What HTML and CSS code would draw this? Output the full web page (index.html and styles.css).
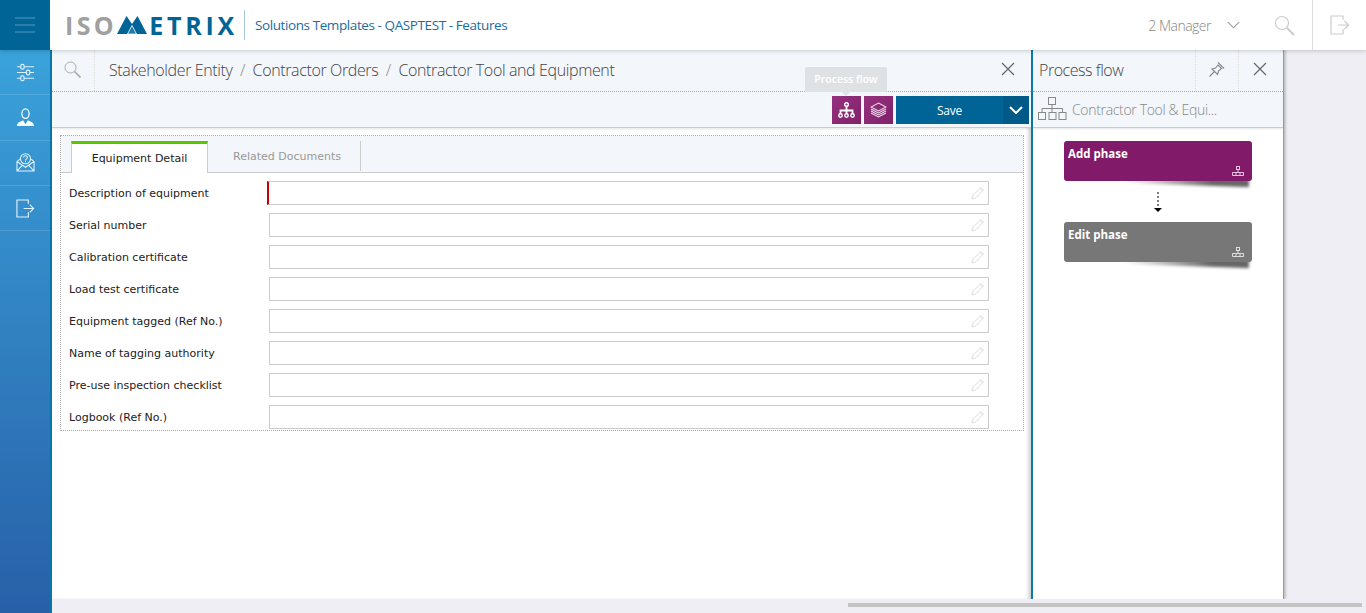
FILE: index.html
```html
<!DOCTYPE html>
<html lang="en">
<head>
  <meta charset="UTF-8" />
  <title>Isometrix - Contractor Tool and Equipment</title>
  <link rel="stylesheet" href="styles.css">
</head>
<body>
  <header class="topbar">
    <div class="menu-btn">
      <svg width="22" height="20" viewBox="0 0 22 20"><path d="M1 3h20M1 10h20M1 17h20" stroke="#2a7fab" stroke-width="2" /></svg>
    </div>
    <div class="logo">
      <span class="logo-iso">ISO</span>
      <svg class="logo-mark" width="30" height="18" viewBox="0 0 30 18"><path d="M0 18 9.500 0 15 8 20.500 0 30 18z" fill="#006496" /><path d="M10.500 18 15 9.500 19.500 18z" fill="#1f7ba8" stroke="#fff" stroke-width=".8" /></svg>
      <span class="logo-rest">ETRIX</span>
    </div>
    <div class="app-title">Solutions Templates - QASPTEST - Features</div>
    <div class="topbar-right">
      <span class="user-name">2 Manager</span>
      <svg class="user-arrow" width="13" height="8" viewBox="0 0 14 8"><path d="M1 1l6 6 6-6" fill="none" stroke="#999" stroke-width="1.200" /></svg>
      <svg class="top-search" width="21" height="21" viewBox="0 0 21 21"><circle cx="8" cy="8" r="6.500" fill="none" stroke="#ccc" stroke-width="1.200" /><path d="M13 13l7 7" stroke="#ccc" stroke-width="2" /></svg>
      <div class="top-exit">
        <svg width="20" height="20" viewBox="0 0 20 20"><path d="M13 5V1H1v18h12v-5M8 10h10M14.500 6l4 4-4 4" fill="none" stroke="#ccc" stroke-width="1.200" /></svg>
      </div>
    </div>
  </header>

  <div class="workspace">
    <nav class="sidebar">
      <a class="side-item">
        <svg viewBox="0 0 20 20"><path d="M1 4h18M1 10h18M1 16h18" stroke="#dff0fa" stroke-width="1.200" /><g fill="#3a9fd8" stroke="#dff0fa" stroke-width="1.200"><rect x="5" y="1.500" width="3.500" height="5" rx="1.500" /><rect x="11" y="7.500" width="3.500" height="5" rx="1.500" /><rect x="5" y="13.500" width="3.500" height="5" rx="1.500" /></g></svg>
      </a>
      <a class="side-item">
        <svg viewBox="0 0 20 20"><ellipse cx="10" cy="6" rx="3.800" ry="5" fill="none" stroke="#fff" stroke-width="1.300" /><path d="M1 19c0-4 4-4.500 6.500-6l2.500 4 2.500-4c2.500 1.500 6.500 2 6.500 6z" fill="#fff" /></svg>
      </a>
      <a class="side-item">
        <svg viewBox="0 0 20 20"><path d="M1 9l3-2.500M19 9l-3-2.500M1 9v10h18V9M1 9l9 6 9-6M1 19l6-6.500M19 19l-6-6.500" fill="none" stroke="#e4f2fb" stroke-width="1.100" /><circle cx="10" cy="6" r="5.300" fill="none" stroke="#e4f2fb" stroke-width="1.100" /><path d="M8 4.800c0-2.400 4-2.400 4 0 0 1.400-2 1.400-2 3M10 8.500v1" fill="none" stroke="#e4f2fb" stroke-width="1.100" /></svg>
      </a>
      <a class="side-item">
        <svg viewBox="0 0 20 20"><path d="M13 5V1H1v18h12v-5M8 10h10M14.500 6l4 4-4 4" fill="none" stroke="#e4f2fb" stroke-width="1.200" /></svg>
      </a>
    </nav>

    <div class="stage">
      <div class="panels">
        <main class="main">
          <div class="crumbbar">
            <div class="crumb-search">
              <svg width="17" height="17" viewBox="0 0 17 17"><circle cx="6.500" cy="6.500" r="5.500" fill="none" stroke="#aaa" /><path d="M10.500 10.500l6 6" stroke="#aaa" stroke-width="1.600" /></svg>
            </div>
            <div class="crumbs">
              <span>Stakeholder Entity</span><i>/</i><span>Contractor Orders</span><i>/</i><span>Contractor Tool and Equipment</span>
            </div>
            <svg class="close-x" width="14" height="14" viewBox="0 0 14 14"><path d="M1 1l12 12M13 1L1 13" stroke="#666" stroke-width="1.200" /></svg>
          </div>
          <div class="toolbar">
            <div class="tooltip">Process flow</div>
            <button class="tool-btn">
              <svg width="17" height="16" viewBox="0 0 17 16"><circle cx="8.500" cy="2.500" r="1.800" fill="none" stroke="#fff" stroke-width="1.400" /><path d="M8.500 4v8M2.500 12V8.500h12V12" fill="none" stroke="#fff" stroke-width="1.800" /><g fill="none" stroke="#fff" stroke-width="1.400"><circle cx="2.500" cy="13.500" r="1.700" /><circle cx="8.500" cy="13.500" r="1.700" /><circle cx="14.500" cy="13.500" r="1.700" /></g></svg>
            </button>
            <button class="tool-btn">
              <svg width="17" height="16" viewBox="0 0 17 16"><g fill="none" stroke="#ead9e6" stroke-width="1.100"><path d="M8.500 1l7.500 4-7.500 4L1 5z" /><path d="M1 7l7.500 4L16 7M1 9l7.500 4L16 9M1 11l7.500 4 7.500-4" /></g></svg>
            </button>
            <div class="save-group">
              <button class="save-btn">Save</button>
              <button class="save-more">
                <svg width="14" height="8" viewBox="0 0 14 8"><path d="M1 1l6 6 6-6" fill="none" stroke="#fff" stroke-width="2" /></svg>
              </button>
            </div>
          </div>

          <section class="form-box">
            <div class="tabs">
              <div class="tab tab-active">Equipment Detail</div>
              <div class="tab">Related Documents</div>
            </div>
            <div class="rows">
              <div class="row row-required"><label>Description of equipment</label><div class="field"><svg class="pen" width="14" height="14" viewBox="0 0 14 14"><path d="M1 13l.800-3.500L10 1.500l2.500 2.500-8 8zM9 2.500l2.500 2.500" fill="none" stroke="#ddd" /></svg></div></div>
              <div class="row"><label>Serial number</label><div class="field"><svg class="pen" width="14" height="14" viewBox="0 0 14 14"><path d="M1 13l.800-3.500L10 1.500l2.500 2.500-8 8zM9 2.500l2.500 2.500" fill="none" stroke="#ddd" /></svg></div></div>
              <div class="row"><label>Calibration certificate</label><div class="field"><svg class="pen" width="14" height="14" viewBox="0 0 14 14"><path d="M1 13l.800-3.500L10 1.500l2.500 2.500-8 8zM9 2.500l2.500 2.500" fill="none" stroke="#ddd" /></svg></div></div>
              <div class="row"><label>Load test certificate</label><div class="field"><svg class="pen" width="14" height="14" viewBox="0 0 14 14"><path d="M1 13l.800-3.500L10 1.500l2.500 2.500-8 8zM9 2.500l2.500 2.500" fill="none" stroke="#ddd" /></svg></div></div>
              <div class="row"><label>Equipment tagged (Ref No.)</label><div class="field"><svg class="pen" width="14" height="14" viewBox="0 0 14 14"><path d="M1 13l.800-3.500L10 1.500l2.500 2.500-8 8zM9 2.500l2.500 2.500" fill="none" stroke="#ddd" /></svg></div></div>
              <div class="row"><label>Name of tagging authority</label><div class="field"><svg class="pen" width="14" height="14" viewBox="0 0 14 14"><path d="M1 13l.800-3.500L10 1.500l2.500 2.500-8 8zM9 2.500l2.500 2.500" fill="none" stroke="#ddd" /></svg></div></div>
              <div class="row"><label>Pre-use inspection checklist</label><div class="field"><svg class="pen" width="14" height="14" viewBox="0 0 14 14"><path d="M1 13l.800-3.500L10 1.500l2.500 2.500-8 8zM9 2.500l2.500 2.500" fill="none" stroke="#ddd" /></svg></div></div>
              <div class="row"><label>Logbook (Ref No.)</label><div class="field"><svg class="pen" width="14" height="14" viewBox="0 0 14 14"><path d="M1 13l.800-3.500L10 1.500l2.500 2.500-8 8zM9 2.500l2.500 2.500" fill="none" stroke="#ddd" /></svg></div></div>
            </div>
          </section>
        </main>

        <aside class="flow">
          <div class="flow-head">
            <div class="flow-title">Process flow</div>
            <div class="flow-btn">
              <svg width="16" height="15" viewBox="0 0 16 15"><path d="M.5 14.500l5-5M3 7l5.500 5.500 1-3.500 3-2.500-3.500-3.500-2.500 3zM9 .5l6 6" fill="none" stroke="#888" stroke-width="1.100" /></svg>
            </div>
            <div class="flow-btn flow-btn-close">
              <svg width="14" height="14" viewBox="0 0 14 14"><path d="M1 1l12 12M13 1L1 13" stroke="#666" stroke-width="1.200" /></svg>
            </div>
          </div>
          <div class="flow-sub">
            <svg width="29" height="24" viewBox="0 0 29 24"><g fill="none" stroke="#888"><rect x="10.500" y=".5" width="7" height="7" /><rect x=".5" y="15.500" width="7" height="7" /><rect x="11" y="15.500" width="7" height="7" /><rect x="21" y="15.500" width="7" height="7" /><path d="M14 7.500v8M4 15.500v-4h20.500v4" /></g></svg>
            <span>Contractor Tool &amp; Equi...</span>
          </div>
          <div class="flow-body">
            <div class="phase phase-add">
              <span>Add phase</span>
              <svg width="12" height="10" viewBox="0 0 12 10"><g fill="none" stroke="#e6c4de"><rect x="4.500" y=".5" width="3" height="3" /><path d="M.5 6.500h11v3H.5zM4 6.500v3M8 6.500v3M6 3.500v3" /></g></svg>
            </div>
            <div class="phase-link">
              <svg width="8" height="21" viewBox="0 0 8 21"><path d="M4 0v16" stroke="#000" stroke-dasharray="2 2" /><path d="M0 16h8l-4 4z" fill="#000" /></svg>
            </div>
            <div class="phase phase-edit">
              <span>Edit phase</span>
              <svg width="12" height="10" viewBox="0 0 12 10"><g fill="none" stroke="#ddd"><rect x="4.500" y=".5" width="3" height="3" /><path d="M.5 6.500h11v3H.5zM4 6.500v3M8 6.500v3M6 3.500v3" /></g></svg>
            </div>
          </div>
        </aside>
      </div>
      <div class="hscroll"><div class="hscroll-thumb"></div></div>
    </div>
  </div>
</body>
</html>
```

FILE: styles.css
```css
* {
  box-sizing: border-box;
}

html, body {
  height: 100%;
}

body {
  margin: 0;
  display: flex;
  flex-direction: column;
  overflow: hidden;
  background: #eeeef4;
  font-family: "DejaVu Sans", sans-serif;
  font-size: 11px;
  color: #222;
}

svg {
  display: block;
  flex: none;
}

button {
  border: none;
  padding: 0;
  cursor: pointer;
}

/* top bar */
.topbar {
  height: 50px;
  flex: none;
  display: flex;
  align-items: center;
  background: #fff;
  position: relative;
  z-index: 3;
  box-shadow: 0 1px 4px #00000030;
}

.menu-btn {
  width: 50px;
  height: 50px;
  display: flex;
  align-items: center;
  justify-content: center;
  background: #006496;
}

.logo {
  display: flex;
  align-items: center;
  margin-left: 15px;
  height: 30px;
  width: 180px;
  border-right: 1px solid #a6c8d8;
  font-family: "Open Sans", sans-serif;
  font-size: 25px;
  font-weight: 700;
  letter-spacing: 3.400px;
}

.logo-iso {
  color: #a0a0a0;
}

.logo-mark {
  margin: 0 2px 0 0;
}

.logo-rest {
  color: #006496;
  letter-spacing: 3.800px;
}

.app-title {
  margin-left: 10px;
  font-family: "Open Sans", sans-serif;
  font-size: 13.500px;
  letter-spacing: -0.410px;
  color: #1a6d9e;
}

.topbar-right {
  margin-left: auto;
  display: flex;
  align-items: center;
  height: 50px;
  font-family: "Open Sans", sans-serif;
  font-size: 14px;
  font-weight: 300;
  letter-spacing: -0.500px;
  color: #888;
}

.user-arrow {
  margin-left: 16px;
}

.top-search {
  margin-left: 34px;
}

.top-exit {
  margin-left: 17px;
  width: 54px;
  height: 50px;
  display: flex;
  align-items: center;
  justify-content: center;
  border-left: 1px solid #ddd;
}

/* left nav */
.workspace {
  flex: 1;
  display: flex;
  min-height: 0;
}

.sidebar {
  width: 52px;
  flex: none;
  background: linear-gradient(#3aa2da, #2860a8);
  border-right: 2px solid #0a76a8;
}

.side-item {
  height: 45.300px;
  display: flex;
  align-items: center;
  justify-content: center;
  border-bottom: 1px solid #ffffff22;
}

.side-item svg {
  width: 19px;
  height: 19px;
}

/* center */
.stage {
  flex: 1;
  min-width: 0;
  display: flex;
  flex-direction: column;
}

.panels {
  flex: 1;
  display: flex;
  min-height: 0;
}

.main {
  width: 979px;
  flex: none;
  background: #fff;
  box-shadow: inset -4px 0 4px -2px #00000038;
}

.crumbbar {
  height: 42px;
  display: flex;
  align-items: center;
  background: #f3f6fa;
  border-bottom: 1px dotted #aaa;
}

.crumb-search {
  width: 43px;
  height: 41px;
  padding: 11px 0 0 12px;
  border-right: 1px dotted #ddd;
  display: flex;
  align-items: flex-start;
}

.crumbs {
  flex: 1;
  margin: -2px 0 0 14px;
  display: flex;
  font-family: "Open Sans", sans-serif;
  font-size: 16px;
  font-weight: 300;
  letter-spacing: -0.370px;
  color: #444;
}

.crumbs i {
  font-style: normal;
  margin: 0 7.500px;
  color: #888;
}

.close-x {
  margin: -3px 16px 0 0;
}

.toolbar {
  height: 36px;
  display: flex;
  align-items: flex-start;
  justify-content: flex-end;
  gap: 3px;
  padding: 4px 2px 0 0;
  position: relative;
  background: #f3f6fa;
  border-bottom: 1px solid #ccc;
  box-shadow: 0 1px 2px #0000001a;
}

.tooltip {
  position: absolute;
  left: 753px;
  top: -25px;
  width: 82px;
  height: 25px;
  border-radius: 2px;
  background: #dfe2e5;
  color: #fff;
  font-family: "Open Sans", sans-serif;
  font-size: 10.500px;
  font-weight: 600;
  line-height: 25px;
  text-align: center;
}

.tooltip::after {
  content: "";
  position: absolute;
  left: 37px;
  top: 25px;
  border: 4px solid transparent;
  border-top-color: #dfe2e5;
}

.tool-btn {
  width: 29px;
  height: 28px;
  display: flex;
  align-items: center;
  justify-content: center;
  background: linear-gradient(135deg, #96307e, #80226a);
}

.save-group {
  display: flex;
}

.save-btn {
  width: 107px;
  height: 28px;
  background: #006496;
  color: #fff;
  font-family: "Open Sans", sans-serif;
  font-size: 12px;
  letter-spacing: -0.200px;
}

.save-more {
  width: 26px;
  height: 28px;
  display: flex;
  align-items: center;
  justify-content: center;
  background: #005a88;
}

/* form */
.form-box {
  margin: 7px 7px 0 8px;
  height: 296px;
  border: 1px dotted #aaa;
}

.tabs {
  height: 37px;
  padding: 5px 0 0 10px;
  display: flex;
  background: #f3f6fa;
  border-bottom: 1px solid #ccc;
}

.tab {
  width: 153px;
  height: 30px;
  padding-left: 6px;
  text-align: center;
  line-height: 31px;
  color: #999;
  border-right: 1px solid #ccc;
}

.tab-active {
  width: 137px;
  height: 32px;
  padding-left: 0;
  line-height: 30px;
  color: #222;
  background: #fff;
  border-top: 3px solid #5bc400;
  border-left: 1px solid #ccc;
  border-right: 1px solid #ccc;
}

.rows {
  padding: 8px 34px 0 8px;
  display: flex;
  flex-direction: column;
  gap: 8px;
}

.row {
  display: flex;
  align-items: center;
  height: 24px;
}

.row label {
  width: 200px;
  flex: none;
}

.field {
  flex: 1;
  height: 24px;
  display: flex;
  align-items: center;
  justify-content: flex-end;
  padding-right: 3px;
  border: 1px solid #ccc;
  background: #fff;
}

.row-required .field {
  margin-left: -2px;
  border-left: 2px solid #c80000;
}

/* process flow panel */
.flow {
  width: 253px;
  flex: none;
  background: #fff;
  border-left: 2px solid #0a7ab0;
  border-right: 1px solid #999;
  box-shadow: 2px 0 2px #00000030;
}

.flow-head {
  height: 42px;
  display: flex;
  align-items: center;
  background: #f3f6fa;
  border-bottom: 1px dotted #aaa;
}

.flow-title {
  flex: 1;
  margin-top: -2px;
  padding-left: 6px;
  font-family: "Open Sans", sans-serif;
  font-size: 16px;
  font-weight: 300;
  letter-spacing: -0.450px;
  color: #444;
}

.flow-btn {
  width: 43px;
  height: 41px;
  padding-bottom: 3px;
  display: flex;
  align-items: center;
  justify-content: center;
  border-left: 1px dotted #ddd;
}

.flow-btn-close {
  width: 45px;
  padding-right: 3px;
}

.flow-sub {
  height: 36px;
  display: flex;
  align-items: center;
  gap: 5px;
  padding: 0 0 1px 5px;
  background: #f3f6fa;
  border-bottom: 1px solid #ccc;
  box-shadow: 0 1px 2px #0000001a;
  font-family: "Open Sans", sans-serif;
  font-size: 14px;
  font-weight: 300;
  letter-spacing: -0.330px;
  color: #888;
}

.flow-body {
  padding: 13px 0 0 31px;
  isolation: isolate;
}

.phase {
  width: 188px;
  height: 40px;
  padding: 5px 4px;
  position: relative;
  border-radius: 3px;
  color: #fff;
  font-family: "Open Sans", sans-serif;
  font-size: 11.500px;
  font-weight: 700;
}

/* the lifted shadow under the right corner of a card */
.phase::after {
  content: "";
  position: absolute;
  z-index: -1;
  right: 3px;
  bottom: -4px;
  width: 125px;
  height: 9px;
  background: linear-gradient(to right, #ffffff00, #666 70%);
  filter: blur(1.500px);
  transform: rotate(2deg);
}

.phase svg {
  position: absolute;
  right: 8px;
  bottom: 5px;
}

.phase-add {
  background: #811a68;
}

.phase-edit {
  background: #777;
}

.phase-link {
  height: 41px;
  display: flex;
  align-items: center;
  padding: 2px 0 0 90px;
}

/* bottom scrollbar */
.hscroll {
  height: 14px;
  flex: none;
  padding: 4px 4px 0 796px;
  background: #eeeef4;
}

.hscroll-thumb {
  height: 4px;
  background: #c4c4c4;
}
```
